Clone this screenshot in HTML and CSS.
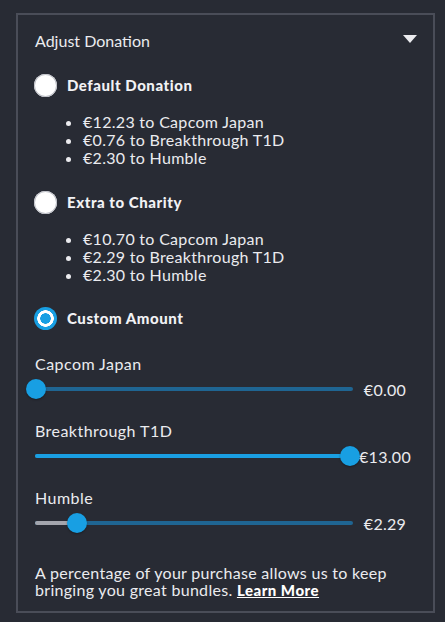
FILE: index.html
```html
<!DOCTYPE html>
<html lang="en">
<head>
<meta charset="utf-8">
<title>Adjust Donation</title>
<link rel="stylesheet" href="styles.css">
</head>
<body>
<div class="panel">
  <div class="header">
    <span class="title">Adjust Donation</span>
    <span class="caret"></span>
  </div>

  <div class="option first">
    <span class="radio"></span>
    <span class="opt-label">Default Donation</span>
  </div>
  <ul class="split">
    <li>€12.23 to Capcom Japan</li>
    <li>€0.76 to Breakthrough T1D</li>
    <li>€2.30 to Humble</li>
  </ul>

  <div class="option second">
    <span class="radio"></span>
    <span class="opt-label">Extra to Charity</span>
  </div>
  <ul class="split">
    <li>€10.70 to Capcom Japan</li>
    <li>€2.29 to Breakthrough T1D</li>
    <li>€2.30 to Humble</li>
  </ul>

  <div class="option third">
    <span class="radio checked"></span>
    <span class="opt-label">Custom Amount</span>
  </div>

  <div class="fields">
    <div class="field">
      <div class="flabel">Capcom Japan</div>
      <div class="slider-row">
        <div class="track">
          <div class="rail"></div>
          <div class="thumb" style="left:1px"></div>
        </div>
        <div class="value">€0.00</div>
      </div>
    </div>
    <div class="field">
      <div class="flabel">Breakthrough T1D</div>
      <div class="slider-row">
        <div class="track">
          <div class="rail"></div>
          <div class="fill blue" style="width:315px"></div>
          <div class="thumb" style="left:315px"></div>
        </div>
        <div class="value">€13.00</div>
      </div>
    </div>
    <div class="field">
      <div class="flabel">Humble</div>
      <div class="slider-row">
        <div class="track">
          <div class="rail"></div>
          <div class="fill grey" style="width:42px"></div>
          <div class="thumb" style="left:42px"></div>
        </div>
        <div class="value">€2.29</div>
      </div>
    </div>
  </div>

  <p class="note">A percentage of your purchase allows us to keep bringing you great bundles. <a href="#" class="learn">Learn More</a></p>
</div>
</body>
</html>
```

FILE: styles.css
```css
* { box-sizing: border-box; }

html, body {
  margin: 0;
  padding: 0;
  background: #282b34;
}

body {
  width: 445px;
  height: 622px;
  padding: 13px 0 0 16px;
  font-family: Lato, "Noto Sans", sans-serif;
  color: #ebebef;
  font-size: 16px;
  letter-spacing: 0.3px;
}

.panel {
  width: 419px;
  height: 600px;
  border: 2px solid #4a4d58;
  padding: 13px 0 0 17px;
}

.header {
  height: 24px;
  display: flex;
  align-items: center;
  justify-content: space-between;
  padding-right: 16px;
}

.title {
  font-size: 16px;
  letter-spacing: 0;
}

.caret {
  width: 0;
  height: 0;
  border-left: 7.5px solid transparent;
  border-right: 7.5px solid transparent;
  border-top: 8px solid #ebebef;
  margin-top: -2px;
}

.option {
  height: 24px;
  display: flex;
  align-items: center;
  gap: 10px;
  margin-left: -1px;
}
.option.first { margin-top: 21px; }
.option.second { margin-top: 23px; }
.option.third { margin-top: 22px; }

.radio {
  width: 23px;
  height: 23px;
  border-radius: 50%;
  background: #ffffff;
  box-shadow: 0 0 0 1px #bfc1c8 inset;
  flex: none;
}
.radio.checked {
  background: radial-gradient(circle, #189fe3 0 5px, #ffffff 5.5px 8px, #189fe3 8.5px);
  box-shadow: none;
}

.opt-label {
  font-weight: 900;
  font-size: 15px;
  letter-spacing: 0.55px;
  color: #f2f2f5;
}

.split {
  margin: 16px 0 0 0;
  padding: 0 0 0 48px;
  line-height: 18px;
}

.fields {
  margin-top: 24px;
}
.field + .field {
  margin-top: 22px;
}
.flabel {
  height: 20px;
  line-height: 20px;
  letter-spacing: 0.45px;
}
.slider-row {
  margin-top: 5px;
  height: 20px;
  display: flex;
  align-items: center;
}
.track {
  position: relative;
  width: 318px;
  height: 20px;
  flex: none;
}
.rail, .fill {
  position: absolute;
  left: 0;
  top: 8px;
  height: 4px;
  border-radius: 2px;
}
.rail {
  width: 100%;
  background: #1f6592;
}
.fill.blue { background: #1a9fe2; }
.fill.grey { background: #a3a5ad; }
.thumb {
  position: absolute;
  top: 0;
  width: 20px;
  height: 20px;
  margin-left: -10px;
  border-radius: 50%;
  background: #189fe3;
  box-shadow: 0 1px 2px rgba(0,0,0,0.35);
}
.value {
  width: 60px;
  margin-left: 2px;
  text-align: center;
}

.note {
  margin: 31px 0 0 0;
  line-height: 17px;
  width: 370px;
}
.learn {
  color: #ffffff;
  font-weight: 900;
  font-size: 15px;
  letter-spacing: 0.5px;
  text-decoration: underline;
}
```
